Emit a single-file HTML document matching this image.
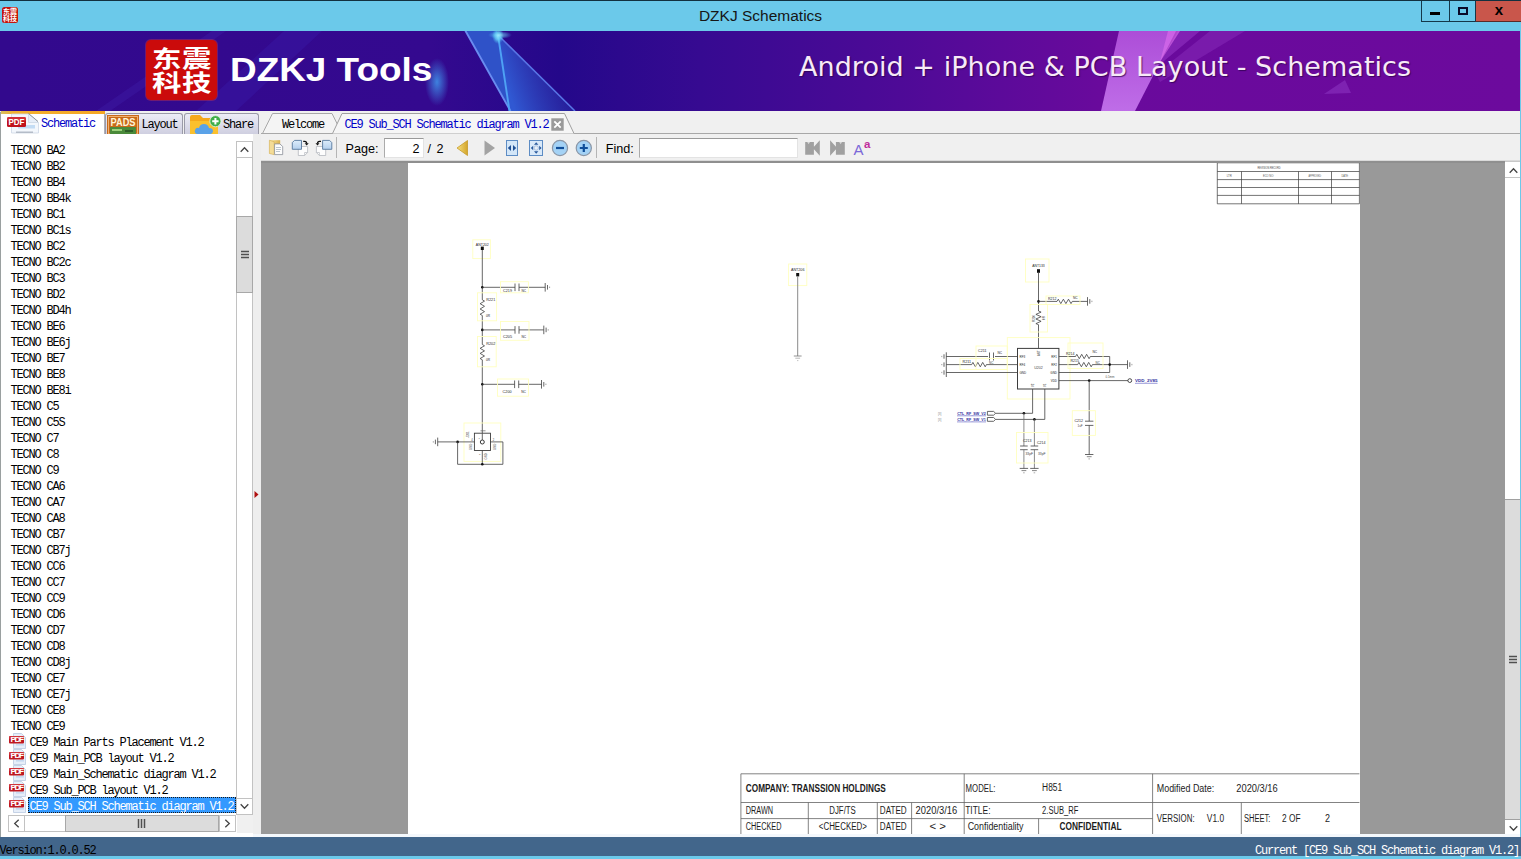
<!DOCTYPE html>
<html><head><meta charset="utf-8"><title>DZKJ Schematics</title>
<style>
*{box-sizing:border-box;margin:0;padding:0}
html,body{width:1521px;height:859px;overflow:hidden;background:#6bc9ea}
body{position:relative;font-family:"Liberation Sans",sans-serif;font-size:12px;color:#000}
.abs{position:absolute}
.mono{font-family:"Liberation Mono","Noto Sans CJK SC",monospace;font-size:12px;letter-spacing:-1.2px;white-space:pre}
#topline{left:0;top:0;width:1521px;height:1px;background:#12303f}
#titlebar{left:0;top:1px;width:1521px;height:30px;background:#6bc9ea}
#title{left:0;top:1px;width:1521px;height:30px;line-height:29px;text-align:center;font-size:15.5px;color:#161616}
#banner{left:0;top:31px;width:1520px;height:80px;background:linear-gradient(90deg,#32098d 0,#34098f 430px,#24088a 560px,#2c098d 620px,#360a91 700px,#420a94 800px,#4e0a97 900px,#5c0a9a 1000px,#690a9c 1100px,#6c0a9d 1520px);overflow:hidden}
#tabstrip{left:0;top:111px;width:1520px;height:23px;background:#f0f0f0}
#side{left:0;top:112px;width:253px;height:725px;background:transparent;border-left:1.500px solid #9aa0a0}
#split{left:253px;top:134px;width:8px;height:702px;background:#eeeeee}
#toolbar{left:261px;top:134px;width:1259px;height:27px;background:#f0f0f0}
#viewer{left:261px;top:161px;width:1244px;height:673px;background:#999999;overflow:hidden;border-top:2px solid #8f8f8f}
#page{left:146.5px;top:0;width:952px;height:673px;background:#fff}
#status{left:0;top:836.5px;width:1521px;height:19.5px;background:#42668b}

#logo{left:146px;top:40px;width:71px;height:60px;background:#cb0b0b;border-radius:5px;box-shadow:0 0 0 1px rgba(230,60,60,.35)}
#logo span{position:absolute;left:5.5px;font-family:"Liberation Sans","Noto Sans CJK SC",sans-serif;font-weight:bold;font-size:23px;line-height:24px;color:#fff;letter-spacing:0.4px;white-space:nowrap;transform-origin:0 0;transform:scaleX(1.28)}
#brand{left:232px;top:48px;font-family:"Liberation Sans",sans-serif;font-weight:bold;font-size:33px;line-height:40px;color:#fff;white-space:pre;transform-origin:0 0;transform:scaleX(1.118)}
#tagline{left:799px;top:51px;font-family:"DejaVu Sans","Liberation Sans",sans-serif;font-size:27px;line-height:32px;color:#f7eaf7;white-space:pre;text-shadow:1px 1px 1px rgba(40,0,70,.7);letter-spacing:0.05px}

#appicon{left:2px;top:7px;width:16px;height:16px;background:#c4140c;border-radius:2.5px;overflow:hidden;color:#fff;font-family:"Liberation Sans","Noto Sans CJK SC",sans-serif;font-weight:bold;font-size:7px;line-height:7px;text-align:center;padding-top:1px;letter-spacing:0}
#wc{left:1421px;top:1px;width:100px;height:21px}
#wc div{position:absolute;top:0;height:21px}
.tab{position:absolute;top:113px;height:21px;border:1px solid #9a9aa8;border-bottom:none;border-radius:3px 3px 0 0;background:linear-gradient(#ececf6,#dcdcea 55%,#cfcfe0)}
.tabtxt{position:absolute;top:117px;line-height:14px}

#list{left:1px;top:141px;width:236px;height:672px;overflow:hidden}
#list div{height:16px;line-height:20px;padding-left:9.5px;position:relative;overflow:visible}
#list div.f{padding-left:28.5px}
#list div.f svg{position:absolute;left:7px;top:-1px}
#list div.sel span{display:inline-block;vertical-align:top;height:16px;line-height:20px;background:#3399ff;color:#fff;outline:1px dotted #1a1a1a;outline-offset:-1px;padding:0 1.5px 0 1.5px;margin-left:-1.5px;width:208px}
.sb{position:absolute;background:#fff;border:1px solid #c2c2c2}
.thumb{position:absolute;background:#dcdcdc;border:1px solid #a8a8a8}

#toolbar .t{position:absolute;top:7.600px;font-size:12.600px;line-height:15px;white-space:pre;color:#000}
.inp{position:absolute;background:#fff;border:1px solid #e3e3e3;border-top-color:#9a9a9a;border-left-color:#ababab}
</style></head><body>
<div id="topline" class="abs"></div>
<div id="titlebar" class="abs"></div>
<div id="title" class="abs">DZKJ Schematics</div>
<div id="appicon" class="abs">东震<br>科技</div>
<div id="wc" class="abs">
<div style="left:0;width:28px;border-left:1px solid #14384a;border-bottom:1px solid #14384a"></div>
<div style="left:28px;width:27px;border-left:1px solid #14384a;border-bottom:1px solid #14384a"></div>
<div style="left:54px;width:46px;background:#c9564b;border-left:1px solid #14384a;border-bottom:1px solid #5a2a28"></div>
<div style="left:9px;top:11px;width:10px;height:3px;background:#000"></div>
<div style="left:37px;top:6px;width:10px;height:8px;border:2px solid #0a0a28;border-top-width:2px"></div>
<div style="left:70px;top:-1px;width:16px;height:21px;line-height:19px;text-align:center;font-weight:bold;font-size:15px;font-family:'Liberation Sans',sans-serif;color:#000">x</div>
</div>
<div id="banner" class="abs">
<svg class="abs" style="left:0;top:0" width="1520" height="80" viewBox="0 31 1520 80">
<defs>
<linearGradient id="ray1" x1="0" y1="0" x2="0" y2="1"><stop offset="0" stop-color="#3a6ad8"/><stop offset="1" stop-color="#2a4ec4"/></linearGradient>
<radialGradient id="glow1"><stop offset="0" stop-color="#3f8fe8" stop-opacity=".9"/><stop offset="1" stop-color="#3f8fe8" stop-opacity="0"/></radialGradient>
<radialGradient id="glow2"><stop offset="0" stop-color="#a8f0ff" stop-opacity="1"/><stop offset=".5" stop-color="#66d4f8" stop-opacity=".75"/><stop offset="1" stop-color="#4fb8f0" stop-opacity="0"/></radialGradient>
<linearGradient id="pray" x1="0" y1="0" x2="0" y2="1"><stop offset="0" stop-color="#b455de"/><stop offset="1" stop-color="#c878f0"/></linearGradient>
</defs>
<polygon points="96,111 110,111 226,31 212,31" fill="#4a30c4" opacity=".2"/>
<polygon points="196,111 236,111 322,31 284,31" fill="#3a22b4" opacity=".3"/>
<linearGradient id="rayR" gradientUnits="userSpaceOnUse" x1="503" y1="75" x2="552" y2="58"><stop offset="0" stop-color="#3058d2" stop-opacity="1"/><stop offset="1" stop-color="#2a34ac" stop-opacity=".55"/></linearGradient>
<polygon points="498,35 575,111 509,111" fill="url(#rayR)"/>
<polygon points="465,31 497,31 498,35 509,111 510,111" fill="#2f52c8"/>
<line x1="465" y1="30" x2="510.5" y2="111" stroke="#6a8cf0" stroke-width="1.9"/>
<line x1="498" y1="35" x2="509.5" y2="111" stroke="#4ea2f4" stroke-width="1.9"/>
<line x1="498" y1="35" x2="575" y2="111" stroke="#5876e6" stroke-width="1.5"/>
<ellipse cx="498" cy="36" rx="6" ry="8" fill="url(#glow2)"/>
<ellipse cx="500" cy="35" rx="12" ry="4" fill="url(#glow2)" opacity=".6"/>
<ellipse cx="437" cy="82" rx="12" ry="24" fill="url(#glow1)"/>
<polygon points="1119,31 1176,31 1135,111 1101,111" fill="url(#pray)" opacity=".9"/>
<polygon points="1178,31 1200,31 1158,66 1152,76" fill="#a040d0" opacity=".45"/>
<polygon points="1210,31 1245,31 1160,82 1156,74" fill="#9236c4" opacity=".38"/>
<polygon points="1168,31 1180,31 1160,62" fill="#e070ee" opacity=".6"/>
<polygon points="1324,94 1345,80 1351,93" fill="#8a32c0" opacity=".6"/>
</svg>
<div id="logo" class="abs" style="left:146px;top:9px"><span style="top:6.5px">东震</span><span style="top:30.5px">科技</span></div>
<div id="brand" class="abs" style="left:229.9px;top:18.5px">DZKJ Tools</div>
<div id="tagline" class="abs" style="top:20px">Android + iPhone &amp; PCB Layout - Schematics</div>
</div>
<div id="tabstrip" class="abs"></div>
<!-- left tabs -->
<div class="abs" style="left:1px;top:111px;width:104px;height:23px;background:#fff;border-right:1px solid #b0b0b8"></div>
<div class="abs" style="left:1px;top:111px;width:104px;height:2.500px;background:linear-gradient(90deg,#d8c060,#f2b030 12%,#f5a623)"></div>
<svg class="abs" style="left:6px;top:112px" width="34" height="22" viewBox="0 0 34 22">
<path d="M5.500 2h17l10 8.500v10.500h-27z" fill="#f3f7fc" stroke="#cdd7e4" stroke-width=".8"/>
<path d="M22.500 2v8.500h10" fill="#e6eef8" stroke="#cdd7e4" stroke-width=".8"/>
<path d="M22.500 1.500l9.500 8" stroke="#707880" stroke-width=".8"/>
<rect x="12" y="13" width="17" height="3.500" fill="#c3dcf4"/><rect x="10" y="19.500" width="17" height="1.500" fill="#b4bcc8"/>
<rect x="1" y="5" width="19" height="10" rx="1.5" fill="#c0121c"/>
<rect x="1" y="5" width="19" height="4" rx="1.5" fill="#d83a40" opacity=".7"/>
<text x="10.5" y="13.3" font-family="Liberation Sans,sans-serif" font-weight="bold" font-size="8.5" fill="#fff" text-anchor="middle" textLength="16" lengthAdjust="spacingAndGlyphs">PDF</text>
</svg>
<div class="tabtxt mono" style="left:41px;color:#0000c8">Schematic</div>
<div class="tab" style="left:105px;width:78px"></div>
<svg class="abs" style="left:107px;top:115px" width="32" height="19" viewBox="0 0 32 19">
<rect x="0" y="0" width="32" height="19" fill="#c86a1a"/>
<rect x="1.5" y="1.5" width="29" height="17.5" fill="none" stroke="#f0b070" stroke-width="1"/>
<rect x="3" y="12" width="26" height="7" fill="#4a8a3a"/>
<rect x="5" y="14" width="10" height="2" fill="#9ad07a"/><rect x="18" y="15" width="8" height="2" fill="#2e5e28"/>
<text x="16" y="11" font-family="Liberation Sans,sans-serif" font-weight="bold" font-size="10" fill="#fff4d8" text-anchor="middle" textLength="25" lengthAdjust="spacingAndGlyphs">PADS</text>
</svg>
<div class="tabtxt mono" style="left:141.5px;top:118px">Layout</div>
<div class="tab" style="left:184px;width:75px"></div>
<svg class="abs" style="left:189px;top:114px" width="34" height="20" viewBox="0 0 34 20">
<path d="M1 3q0-2 2-2h8l3 3h13q2 0 2 2v14h-28z" fill="#f5a81c"/>
<path d="M1 7h28v13h-28z" fill="#fbc02d"/>
<path d="M8 20q-3-1-2-4q1-3 4-2q1-4 5-4q4 0 5 4q4 0 4 3q0 2-2 3z" fill="#5aa2e8"/>
<circle cx="26.4" cy="7.2" r="5.6" fill="#3fae49" stroke="#e9f7e9" stroke-width=".8"/>
<path d="M26.4 4v6.4M23.2 7.2h6.4" stroke="#fff" stroke-width="2"/>
</svg>
<div class="tabtxt mono" style="left:223px;top:118px">Share</div>
<!-- doc tabs -->
<svg class="abs" style="left:261px;top:111px" width="330" height="24" viewBox="261 111 330 24">
<path d="M262.5 133.5L272.5 113.5H332L342 133.5z" fill="#f4f4f4" stroke="#a8a8a8"/>
<path d="M261 133.5H1520" stroke="#a8a8a8"/>
<path d="M332.5 133.5L342 113.5H564.5L574 133.5z" fill="#f6f6f6" stroke="none"/>
<path d="M332.5 133.5L342 113.5H564.5L574 133.5" fill="none" stroke="#a0a0a0"/>
<rect x="551.300" y="118.300" width="12.400" height="12.400" fill="#9a9a9a"/>
<path d="M554.300 121.300l6.400 6.400m0-6.400l-6.400 6.400" stroke="#fff" stroke-width="1.800"/>
</svg>
<div class="abs" style="left:574px;top:133px;width:946px;height:1px;background:#a8a8a8"></div>
<div class="tabtxt mono" style="left:282px;top:118px">Welcome</div>
<div class="tabtxt mono" style="left:344.5px;top:118px;color:#0000c8">CE9 Sub_SCH Schematic diagram V1.2</div>

<div class="abs" style="left:0;top:134px;width:253px;height:703px;background:#fff"></div><div class="abs" style="left:236.500px;top:814.400px;width:25px;height:18.600px;background:#f0f0f0"></div><div id="side" class="abs"></div>
<div id="split" class="abs"></div><div id="list" class="abs mono"><div>TECNO BA2</div><div>TECNO BB2</div><div>TECNO BB4</div><div>TECNO BB4k</div><div>TECNO BC1</div><div>TECNO BC1s</div><div>TECNO BC2</div><div>TECNO BC2c</div><div>TECNO BC3</div><div>TECNO BD2</div><div>TECNO BD4h</div><div>TECNO BE6</div><div>TECNO BE6j</div><div>TECNO BE7</div><div>TECNO BE8</div><div>TECNO BE8i</div><div>TECNO C5</div><div>TECNO C5S</div><div>TECNO C7</div><div>TECNO C8</div><div>TECNO C9</div><div>TECNO CA6</div><div>TECNO CA7</div><div>TECNO CA8</div><div>TECNO CB7</div><div>TECNO CB7j</div><div>TECNO CC6</div><div>TECNO CC7</div><div>TECNO CC9</div><div>TECNO CD6</div><div>TECNO CD7</div><div>TECNO CD8</div><div>TECNO CD8j</div><div>TECNO CE7</div><div>TECNO CE7j</div><div>TECNO CE8</div><div>TECNO CE9</div><div class="f"><svg width="20" height="17" viewBox="0 0 20 17"><path d="M5.5 1.5h8l4 4v11h-12z" fill="#e6eef9" stroke="#b9c9df" stroke-width=".8"/><rect x="8" y="9" width="8" height="1.6" fill="#b7cfee"/><rect x="8" y="12" width="8" height="1.6" fill="#c6d9f0"/><rect x="1" y="4" width="15" height="7.5" rx="1" fill="#bf1820"/><rect x="1" y="4" width="15" height="3" rx="1" fill="#dc4a50" opacity=".6"/><text x="8.5" y="10.3" font-family="Liberation Sans,sans-serif" font-weight="bold" font-size="6.5" fill="#fff" text-anchor="middle" textLength="12" lengthAdjust="spacingAndGlyphs">PDF</text></svg>CE9 Main Parts Placement V1.2</div><div class="f"><svg width="20" height="17" viewBox="0 0 20 17"><path d="M5.5 1.5h8l4 4v11h-12z" fill="#e6eef9" stroke="#b9c9df" stroke-width=".8"/><rect x="8" y="9" width="8" height="1.6" fill="#b7cfee"/><rect x="8" y="12" width="8" height="1.6" fill="#c6d9f0"/><rect x="1" y="4" width="15" height="7.5" rx="1" fill="#bf1820"/><rect x="1" y="4" width="15" height="3" rx="1" fill="#dc4a50" opacity=".6"/><text x="8.5" y="10.3" font-family="Liberation Sans,sans-serif" font-weight="bold" font-size="6.5" fill="#fff" text-anchor="middle" textLength="12" lengthAdjust="spacingAndGlyphs">PDF</text></svg>CE9 Main_PCB layout V1.2</div><div class="f"><svg width="20" height="17" viewBox="0 0 20 17"><path d="M5.5 1.5h8l4 4v11h-12z" fill="#e6eef9" stroke="#b9c9df" stroke-width=".8"/><rect x="8" y="9" width="8" height="1.6" fill="#b7cfee"/><rect x="8" y="12" width="8" height="1.6" fill="#c6d9f0"/><rect x="1" y="4" width="15" height="7.5" rx="1" fill="#bf1820"/><rect x="1" y="4" width="15" height="3" rx="1" fill="#dc4a50" opacity=".6"/><text x="8.5" y="10.3" font-family="Liberation Sans,sans-serif" font-weight="bold" font-size="6.5" fill="#fff" text-anchor="middle" textLength="12" lengthAdjust="spacingAndGlyphs">PDF</text></svg>CE9 Main_Schematic diagram V1.2</div><div class="f"><svg width="20" height="17" viewBox="0 0 20 17"><path d="M5.5 1.5h8l4 4v11h-12z" fill="#e6eef9" stroke="#b9c9df" stroke-width=".8"/><rect x="8" y="9" width="8" height="1.6" fill="#b7cfee"/><rect x="8" y="12" width="8" height="1.6" fill="#c6d9f0"/><rect x="1" y="4" width="15" height="7.5" rx="1" fill="#bf1820"/><rect x="1" y="4" width="15" height="3" rx="1" fill="#dc4a50" opacity=".6"/><text x="8.5" y="10.3" font-family="Liberation Sans,sans-serif" font-weight="bold" font-size="6.5" fill="#fff" text-anchor="middle" textLength="12" lengthAdjust="spacingAndGlyphs">PDF</text></svg>CE9 Sub_PCB layout V1.2</div><div class="f sel"><svg width="20" height="17" viewBox="0 0 20 17"><path d="M5.5 1.5h8l4 4v11h-12z" fill="#e6eef9" stroke="#b9c9df" stroke-width=".8"/><rect x="8" y="9" width="8" height="1.6" fill="#b7cfee"/><rect x="8" y="12" width="8" height="1.6" fill="#c6d9f0"/><rect x="1" y="4" width="15" height="7.5" rx="1" fill="#bf1820"/><rect x="1" y="4" width="15" height="3" rx="1" fill="#dc4a50" opacity=".6"/><text x="8.5" y="10.3" font-family="Liberation Sans,sans-serif" font-weight="bold" font-size="6.5" fill="#fff" text-anchor="middle" textLength="12" lengthAdjust="spacingAndGlyphs">PDF</text></svg><span>CE9 Sub_SCH Schematic diagram V1.2</span></div></div>
<div class="sb" style="left:236px;top:141px;width:17px;height:673px"></div>
<div class="sb" style="left:236px;top:141px;width:17px;height:17px"><svg class="abs" style="left:3px;top:4px" width="9" height="7" viewBox="0 0 9 7"><path d="M.7 5.7L4.5 1.7L8.3 5.7" fill="none" stroke="#444" stroke-width="1.3"/></svg></div>
<div class="thumb" style="left:236px;top:216px;width:17px;height:77px"><svg class="abs" style="left:4px;top:33px" width="8" height="9" viewBox="0 0 8 9"><path d="M0 1.5h8M0 4.5h8M0 7.5h8" stroke="#505050" stroke-width="1.5"/></svg></div>
<div class="sb" style="left:236px;top:798px;width:17px;height:16.500px"><svg class="abs" style="left:3px;top:4px" width="9" height="7" viewBox="0 0 9 7"><path d="M.7 1.3L4.5 5.3L8.3 1.3" fill="none" stroke="#444" stroke-width="1.3"/></svg></div>
<div class="sb" style="left:8px;top:815px;width:228px;height:17px"></div>
<div class="sb" style="left:8px;top:815px;width:17px;height:17px"><svg class="abs" style="left:4px;top:3px" width="7" height="9" viewBox="0 0 7 9"><path d="M5.7 .7L1.7 4.5L5.7 8.3" fill="none" stroke="#444" stroke-width="1.3"/></svg></div>
<div class="thumb" style="left:65px;top:815px;width:154px;height:17px"><svg class="abs" style="left:71px;top:3px" width="9" height="9" viewBox="0 0 9 9"><path d="M1.5 0v9M4.5 0v9M7.5 0v9" stroke="#505050" stroke-width="1.5"/></svg></div>
<div class="sb" style="left:219px;top:815px;width:17px;height:17px"><svg class="abs" style="left:4px;top:3px" width="7" height="9" viewBox="0 0 7 9"><path d="M1.3 .7L5.3 4.5L1.3 8.3" fill="none" stroke="#444" stroke-width="1.3"/></svg></div>
<svg class="abs" style="left:254px;top:490px" width="5" height="9" viewBox="0 0 5 9"><path d="M.5 1L4.5 4.5L.5 8z" fill="#b01010"/></svg>

<div id="toolbar" class="abs">
<div class="abs" style="left:0;top:26px;width:1259px;height:1px;background:#dadada"></div>
<!-- icons: coordinates relative to toolbar (x-261,y-134) -->
<svg class="abs" style="left:0;top:0" width="620" height="27" viewBox="261 134 620 27">
<!-- copy icon -->
<defs><linearGradient id="fold" x1="0" y1="0" x2="1" y2="0"><stop offset="0" stop-color="#f7e6a8"/><stop offset=".45" stop-color="#ecd07c"/><stop offset="1" stop-color="#d8b050"/></linearGradient>
<linearGradient id="bpg" x1="0" y1="0" x2="0" y2="1"><stop offset="0" stop-color="#dcecfa"/><stop offset="1" stop-color="#b4d0ee"/></linearGradient></defs>
<path d="M269.400 140.200h10.800v13.600h-10.800z" fill="url(#fold)"/>
<path d="M269.400 140.200l4.800 1.600v12.900l-4.800-1.200z" fill="#f3dc98" stroke="#caa548" stroke-width=".5"/>
<path d="M274.600 143.900h5.200l2.900 2.600v8.100h-8.100z" fill="#fdfdfd" stroke="#8a8f98" stroke-width=".8"/>
<path d="M276 147.500h5M276 149.500h5M276 151.500h4" stroke="#a9b7c4" stroke-width=".8"/>
<!-- rotate cw -->
<path d="M298.300 146.500h9.300v6l-3 3h-6.300z" fill="#fdfdfd" stroke="#b4b8be" stroke-width=".8"/>
<path d="M304.600 155.500v-3h3" fill="none" stroke="#b4b8be" stroke-width=".7"/>
<path d="M294.500 140.400h7v8.900h-9.200v-6.700z" fill="url(#bpg)" stroke="#56789e" stroke-width=".9"/>
<path d="M303.200 141.300h1.500q2 0 2 2.200" fill="none" stroke="#111" stroke-width="1.200"/><path d="M304.700 143.300h4l-2 2.200z" fill="#111"/>
<!-- rotate ccw -->
<path d="M316.400 146.500h9.300v9h-6.300l-3-3z" fill="#fdfdfd" stroke="#b4b8be" stroke-width=".8"/>
<path d="M319.400 155.500v-3h-3" fill="none" stroke="#b4b8be" stroke-width=".7"/>
<path d="M322.600 140.400h7l2.200 2.200v6.700h-9.200z" fill="url(#bpg)" stroke="#56789e" stroke-width=".9"/>
<path d="M321 141.300h-1.500q-2 0-2 2.200" fill="none" stroke="#111" stroke-width="1.200"/><path d="M315.500 143.300h4l-2 2.200z" fill="#111"/>
<path d="M336.500 137v21" stroke="#b5b5b5"/>
<!-- prev / next -->
<defs><linearGradient id="gold" x1="0" y1="0" x2="1" y2="0"><stop offset="0" stop-color="#f6e080"/><stop offset="1" stop-color="#d4a52a"/></linearGradient></defs>
<path d="M467.500 140.500v15l-10.500-7.500z" fill="url(#gold)" stroke="#c79a2a" stroke-width=".8"/>
<path d="M484.500 140.500v15l10.500-7.500z" fill="#a3a3a3"/>
<!-- fit width -->
<rect x="506.500" y="140.500" width="11" height="15" fill="#d3e6f8" stroke="#5d8cc4"/>
<path d="M511 145v6l-3.200-3zM513 145v6l3.200-3z" fill="#1f4f94"/>
<!-- fit page -->
<rect x="529.500" y="140.500" width="13" height="15" fill="#d9e9f9" stroke="#5d8cc4"/>
<path d="M534 144.800h4.400l-2.200-2.600zM534 151.200h4.400l-2.200 2.600zM533.200 145.800v4.400l-2.400-2.200zM539.200 145.800v4.400l2.400-2.200z" fill="#2a5a9c"/>
<circle cx="536.200" cy="148" r="2.200" fill="#e8f0f8" stroke="#9fb8d8" stroke-width=".8"/>
<!-- zoom out/in -->
<circle cx="560" cy="148" r="7.600" fill="#a4d2f5" stroke="#8a96a6" stroke-width="1.2"/>
<path d="M556 148h8" stroke="#0f4e9a" stroke-width="2.200"/>
<circle cx="583.800" cy="148" r="7.600" fill="#a4d2f5" stroke="#8a96a6" stroke-width="1.2"/>
<path d="M579.800 148h8M583.800 144v8" stroke="#0f4e9a" stroke-width="2.200"/>
<path d="M596.500 137v21" stroke="#b5b5b5"/>
<!-- find prev/next -->
<path d="M805.200 142h8.700v12.700h-8.700zM819.800 140.300v15.400l-7-7.700z" fill="#a0a0a0"/>
<path d="M807.200 142l1.400 2.200l1.400-2.200z" fill="#d8d8d8"/>
<path d="M844.800 142h-8.900v12.700h8.900zM830.100 140.300v15.400l7-7.700z" fill="#a0a0a0"/>
<path d="M839.200 142l1.400 2.200l1.400-2.200z" fill="#d8d8d8"/>
</svg>
<div class="t" style="left:84.500px">Page:</div>
<div class="inp" style="left:123px;top:4px;width:40px;height:20px"></div>
<div class="t" style="left:151.500px">2</div>
<div class="t" style="left:166.500px">/</div><div class="t" style="left:175.500px">2</div>
<div class="t" style="left:344.700px">Find:</div>
<div class="inp" style="left:378px;top:4px;width:159px;height:19.500px"></div>
<div class="abs" style="left:592.500px;top:7px;font-size:15px;line-height:18px;color:#7b68d8;font-family:'Liberation Sans',sans-serif">A</div>
<div class="abs" style="left:603px;top:3.500px;font-size:11.500px;line-height:12px;color:#c02e9c;font-weight:bold;font-family:'Liberation Sans',sans-serif">a</div>
</div>
<div id="viewer" class="abs"><div id="page" class="abs"></div>
<!--SCH-START--><svg class="abs" style="left:0;top:0" width="1244" height="671" viewBox="261 163 1244 671" font-family="Liberation Sans,sans-serif" fill="none">
<path d="M1217.3 162.8L1359.4 162.8" stroke="#3a3a3a" stroke-width="0.7"/>
<path d="M1217.3 171.5L1359.4 171.5" stroke="#3a3a3a" stroke-width="0.7"/>
<path d="M1217.3 179.6L1359.4 179.6" stroke="#3a3a3a" stroke-width="0.7"/>
<path d="M1217.3 187.5L1359.4 187.5" stroke="#3a3a3a" stroke-width="0.7"/>
<path d="M1217.3 195.4L1359.4 195.4" stroke="#3a3a3a" stroke-width="0.7"/>
<path d="M1217.3 203.8L1359.4 203.8" stroke="#3a3a3a" stroke-width="0.7"/>
<path d="M1217.3 162.8L1217.3 203.8" stroke="#3a3a3a" stroke-width="0.7"/>
<path d="M1359.4 162.8L1359.4 203.8" stroke="#3a3a3a" stroke-width="0.7"/>
<path d="M1241.5 171.5L1241.5 203.8" stroke="#3a3a3a" stroke-width="0.7"/>
<path d="M1298.5 171.5L1298.5 203.8" stroke="#3a3a3a" stroke-width="0.7"/>
<path d="M1331.5 171.5L1331.5 203.8" stroke="#3a3a3a" stroke-width="0.7"/>
<text x="1269" y="168.7" font-size="2.8" fill="#444" text-anchor="middle" textLength="23" lengthAdjust="spacingAndGlyphs">REVISION RECORD</text>
<text x="1229.3" y="176.9" font-size="2.8" fill="#555" text-anchor="middle">LTR</text>
<text x="1268.5" y="176.9" font-size="2.8" fill="#555" text-anchor="middle" textLength="11" lengthAdjust="spacingAndGlyphs">ECO NO:</text>
<text x="1315" y="176.9" font-size="2.8" fill="#555" text-anchor="middle" textLength="13" lengthAdjust="spacingAndGlyphs">APPROVED:</text>
<text x="1345" y="176.9" font-size="2.8" fill="#555" text-anchor="middle" textLength="7" lengthAdjust="spacingAndGlyphs">DATE:</text>
<rect x="472.8" y="239.8" width="17.6" height="18.8" fill="none" stroke="#ffffc0" stroke-width="0.9"/>
<text x="482.3" y="245.6" font-size="3.3" fill="#262626" text-anchor="middle" textLength="13" lengthAdjust="spacingAndGlyphs">ANT202</text>
<rect x="480.8" y="246.6" width="3" height="3.4" fill="#111"/>
<path d="M482.3 250L482.3 299.8" stroke="#404040" stroke-width="0.8"/>
<path d="M482.3 299.8L484.5 301.1L480.1 303.7L484.5 306.3L480.1 309.0L484.5 311.6L480.1 314.2L482.3 315.5" fill="none" stroke="#404040" stroke-width="0.8"/>
<path d="M482.3 315.5L482.3 344.5" stroke="#404040" stroke-width="0.8"/>
<path d="M482.3 344.5L484.5 345.8L480.1 348.3L484.5 350.9L480.1 353.4L484.5 356.0L480.1 358.5L482.3 359.8" fill="none" stroke="#404040" stroke-width="0.8"/>
<path d="M482.3 359.8L482.3 433.2" stroke="#404040" stroke-width="0.8"/>
<rect x="477.5" y="292.8" width="19.1" height="28.0" fill="none" stroke="#ffffc0" stroke-width="0.9"/>
<rect x="477.5" y="336.5" width="18.7" height="30.3" fill="none" stroke="#ffffc0" stroke-width="0.9"/>
<text x="486.3" y="301.2" font-size="3.2" fill="#262626" textLength="9" lengthAdjust="spacingAndGlyphs">R221</text>
<text x="486" y="316.5" font-size="3.2" fill="#262626">0R</text>
<text x="486.3" y="344.5" font-size="3.2" fill="#262626" textLength="9" lengthAdjust="spacingAndGlyphs">R202</text>
<text x="486" y="361.2" font-size="3.2" fill="#262626">0R</text>
<circle cx="482.3" cy="287.3" r="1.3" fill="#111"/>
<path d="M482.3 287.3L515 287.3" stroke="#404040" stroke-width="0.8"/>
<path d="M519 287.3L545.2 287.3" stroke="#404040" stroke-width="0.8"/>
<path d="M515 283.5L515 291.1" stroke="#404040" stroke-width="0.8"/>
<path d="M519 283.5L519 291.1" stroke="#404040" stroke-width="0.8"/>
<path d="M545.2 283.0L545.2 291.6" stroke="#404040" stroke-width="0.8"/>
<path d="M547.5 285.0L547.5 289.6" stroke="#404040" stroke-width="0.8"/>
<path d="M549.6 286.6L549.6 288.0" stroke="#777" stroke-width="0.7"/>
<rect x="500.5" y="281.7" width="27.9" height="11.1" fill="none" stroke="#ffffc0" stroke-width="0.9"/>
<text x="503" y="291.6" font-size="3.2" fill="#262626" textLength="9" lengthAdjust="spacingAndGlyphs">C219</text>
<text x="521.5" y="291.6" font-size="3.2" fill="#262626">NC</text>
<circle cx="482.3" cy="329.9" r="1.3" fill="#111"/>
<path d="M482.3 329.9L515 329.9" stroke="#404040" stroke-width="0.8"/>
<path d="M519 329.9L543.8 329.9" stroke="#404040" stroke-width="0.8"/>
<path d="M515 326.09999999999997L515 333.7" stroke="#404040" stroke-width="0.8"/>
<path d="M519 326.09999999999997L519 333.7" stroke="#404040" stroke-width="0.8"/>
<path d="M543.8 325.59999999999997L543.8 334.2" stroke="#404040" stroke-width="0.8"/>
<path d="M546.0999999999999 327.59999999999997L546.0999999999999 332.2" stroke="#404040" stroke-width="0.8"/>
<path d="M548.1999999999999 329.2L548.1999999999999 330.59999999999997" stroke="#777" stroke-width="0.7"/>
<rect x="500.5" y="321.5" width="28.5" height="18.8" fill="none" stroke="#ffffc0" stroke-width="0.9"/>
<text x="503" y="338.2" font-size="3.2" fill="#262626" textLength="9" lengthAdjust="spacingAndGlyphs">C205</text>
<text x="521.5" y="338.2" font-size="3.2" fill="#262626">NC</text>
<circle cx="482.3" cy="384.3" r="1.3" fill="#111"/>
<path d="M482.3 384.3L514.6 384.3" stroke="#404040" stroke-width="0.8"/>
<path d="M518.7 384.3L541.5 384.3" stroke="#404040" stroke-width="0.8"/>
<path d="M514.6 380.5L514.6 388.1" stroke="#404040" stroke-width="0.8"/>
<path d="M518.7 380.5L518.7 388.1" stroke="#404040" stroke-width="0.8"/>
<path d="M541.5 380.0L541.5 388.6" stroke="#404040" stroke-width="0.8"/>
<path d="M543.8 382.0L543.8 386.6" stroke="#404040" stroke-width="0.8"/>
<path d="M545.9 383.6L545.9 385.0" stroke="#777" stroke-width="0.7"/>
<rect x="497.5" y="379" width="31.0" height="17.2" fill="none" stroke="#ffffc0" stroke-width="0.9"/>
<text x="502.6" y="393" font-size="3.2" fill="#262626" textLength="9" lengthAdjust="spacingAndGlyphs">C200</text>
<text x="521.2" y="393" font-size="3.2" fill="#262626">NC</text>
<rect x="464" y="423" width="36.8" height="38.4" fill="none" stroke="#ffffc0" stroke-width="0.9"/>
<rect x="474.4" y="433.2" width="16.1" height="17.3" fill="#fff" stroke="#3c3c3c" stroke-width="0.9"/>
<circle cx="482.3" cy="442" r="2" fill="#fff" stroke="#222" stroke-width="0.9"/>
<path d="M482.3 433.2L482.3 440" stroke="#404040" stroke-width="0.8"/>
<path d="M480.5 430.8L485.5 430.8" stroke="#666" stroke-width="0.7"/>
<path d="M437.7 441.9L474.4 441.9" stroke="#404040" stroke-width="0.8"/>
<path d="M437.7 437.59999999999997L437.7 446.2" stroke="#404040" stroke-width="0.8"/>
<path d="M435.4 439.59999999999997L435.4 444.2" stroke="#404040" stroke-width="0.8"/>
<path d="M433.3 441.2L433.3 442.59999999999997" stroke="#777" stroke-width="0.7"/>
<circle cx="457.6" cy="441.9" r="1.3" fill="#111"/>
<path d="M457.6 441.9L457.6 464.3L502.9 464.3L502.9 441.9L490.5 441.9" fill="none" stroke="#404040" stroke-width="0.8"/>
<path d="M482.3 450.5L482.3 464.3" stroke="#404040" stroke-width="0.8"/>
<circle cx="482.3" cy="464.3" r="1.3" fill="#111"/>
<text x="469.3" y="437.5" font-size="2.8" fill="#444" transform="rotate(-90 469.3 437.5)">J201</text>
<text x="472.3" y="450" font-size="2.8" fill="#444" transform="rotate(-90 472.3 450)">GND</text>
<text x="496" y="450" font-size="2.8" fill="#444" transform="rotate(-90 496 450)">GND</text>
<text x="487.3" y="459.5" font-size="2.8" fill="#444" transform="rotate(-90 487.3 459.5)">GND</text>
<text x="471.2" y="441" font-size="2.6" fill="#444">4</text>
<text x="492.8" y="441" font-size="2.6" fill="#444">2</text>
<text x="478.5" y="438.5" font-size="2.4" fill="#555">1</text>
<text x="479" y="454.5" font-size="2.4" fill="#555">3</text>
<rect x="788.6" y="264" width="18.2" height="21.6" fill="none" stroke="#ffffc0" stroke-width="0.9"/>
<text x="797.7" y="270.7" font-size="3.3" fill="#262626" text-anchor="middle" textLength="13.5" lengthAdjust="spacingAndGlyphs">ANT206</text>
<rect x="796.2" y="273" width="3" height="3.4" fill="#111"/>
<path d="M797.7 276L797.7 356" stroke="#8a8a8a" stroke-width="1.0"/>
<path d="M793.8 356L801.6 356" stroke="#777" stroke-width="0.8"/>
<path d="M795.3 358.2L800.1 358.2" stroke="#999" stroke-width="0.7"/>
<path d="M797 360.6L798.4 360.6" stroke="#aaa" stroke-width="0.7"/>
<rect x="1025.5" y="259" width="23.5" height="23.0" fill="none" stroke="#ffffc0" stroke-width="0.9"/>
<text x="1038.5" y="266.7" font-size="3.3" fill="#262626" text-anchor="middle" textLength="12.5" lengthAdjust="spacingAndGlyphs">ANT133</text>
<rect x="1037.0" y="269.2" width="3" height="3.6" fill="#111"/>
<path d="M1038.5 272L1038.5 311" stroke="#404040" stroke-width="0.8"/>
<path d="M1038.5 311.0L1041.1 312.1L1035.9 314.4L1041.1 316.7L1035.9 319.0L1041.1 321.3L1035.9 323.6L1038.5 324.7" fill="none" stroke="#404040" stroke-width="0.8"/>
<path d="M1038.5 324.7L1038.5 348.4" stroke="#404040" stroke-width="0.8"/>
<circle cx="1038.5" cy="301.4" r="1.3" fill="#111"/>
<path d="M1038.5 301.4L1057 301.4" stroke="#404040" stroke-width="0.8"/>
<path d="M1057.0 301.4L1058.3 299.2L1060.8 303.6L1063.4 299.2L1065.9 303.6L1068.5 299.2L1071.0 303.6L1072.3 301.4" fill="none" stroke="#404040" stroke-width="0.8"/>
<path d="M1072.3 301.4L1087.5 301.4" stroke="#404040" stroke-width="0.8"/>
<path d="M1087.5 297.09999999999997L1087.5 305.7" stroke="#404040" stroke-width="0.8"/>
<path d="M1089.8 299.09999999999997L1089.8 303.7" stroke="#404040" stroke-width="0.8"/>
<path d="M1091.9 300.7L1091.9 302.09999999999997" stroke="#777" stroke-width="0.7"/>
<rect x="1046" y="296" width="34.0" height="8.5" fill="none" stroke="#ffffc0" stroke-width="0.9"/>
<rect x="1030" y="304.5" width="17.5" height="27.5" fill="none" stroke="#ffffc0" stroke-width="0.9"/>
<text x="1048" y="299.6" font-size="3.2" fill="#262626" textLength="8.5" lengthAdjust="spacingAndGlyphs">R212</text>
<text x="1073" y="299" font-size="3.2" fill="#262626">NC</text>
<text x="1034.5" y="322" font-size="3.0" fill="#262626" transform="rotate(-90 1034.5 322)">R210</text>
<text x="1045" y="320" font-size="3.0" fill="#262626" transform="rotate(-90 1045 320)">0R</text>
<rect x="1007.3" y="337.6" width="62.7" height="61.4" fill="none" stroke="#ffffc0" stroke-width="0.9"/>
<rect x="1017.5" y="348.4" width="41.4" height="40.6" fill="#fff" stroke="#3c3c3c" stroke-width="1"/>
<text x="1019.5" y="357.8" font-size="3.0" fill="#262626">RF3</text>
<text x="1019.5" y="365.8" font-size="3.0" fill="#262626">RF4</text>
<text x="1019.5" y="373.7" font-size="3.0" fill="#262626">GND</text>
<text x="1057" y="357.8" font-size="3.0" fill="#262626" text-anchor="end">RF1</text>
<text x="1057" y="365.8" font-size="3.0" fill="#262626" text-anchor="end">RF2</text>
<text x="1057" y="373.7" font-size="3.0" fill="#262626" text-anchor="end">GND</text>
<text x="1057" y="381.8" font-size="3.0" fill="#262626" text-anchor="end">VDD</text>
<text x="1038.5" y="369" font-size="3.0" fill="#444" text-anchor="middle" textLength="8.5" lengthAdjust="spacingAndGlyphs">U202</text>
<text x="1039.7" y="356" font-size="2.8" fill="#262626" transform="rotate(-90 1039.7 356)">ANT</text>
<text x="1033.6" y="387" font-size="2.8" fill="#262626" transform="rotate(-90 1033.6 387)">V2</text>
<text x="1045.6" y="387" font-size="2.8" fill="#262626" transform="rotate(-90 1045.6 387)">V1</text>
<path d="M946.3 356.5L1017.5 356.5" stroke="#404040" stroke-width="0.8"/>
<path d="M946.3 364.6L1017.5 364.6" stroke="#404040" stroke-width="0.8"/>
<path d="M946.3 372.5L1017.5 372.5" stroke="#404040" stroke-width="0.8"/>
<path d="M946.3 352.3L946.3 377" stroke="#404040" stroke-width="0.8"/>
<path d="M944 354.3L944 358.7" stroke="#404040" stroke-width="0.8"/>
<path d="M941.8 355.9L941.8 357.1" stroke="#777" stroke-width="0.7"/>
<path d="M944 362.40000000000003L944 366.8" stroke="#404040" stroke-width="0.8"/>
<path d="M941.8 364.0L941.8 365.20000000000005" stroke="#777" stroke-width="0.7"/>
<path d="M944 370.3L944 374.7" stroke="#404040" stroke-width="0.8"/>
<path d="M941.8 371.9L941.8 373.1" stroke="#777" stroke-width="0.7"/>
<rect x="988" y="355.5" width="7" height="2" fill="#fff"/>
<path d="M989.5 352.5L989.5 360.5" stroke="#404040" stroke-width="0.8"/>
<path d="M993.5 352.5L993.5 360.5" stroke="#404040" stroke-width="0.8"/>
<rect x="971.7" y="362" width="14.7" height="5" fill="#fff"/>
<path d="M971.7 364.6L972.9 362.4L975.4 366.8L977.8 362.4L980.3 366.8L982.7 362.4L985.2 366.8L986.4 364.6" fill="none" stroke="#404040" stroke-width="0.8"/>
<rect x="976" y="346" width="31.3" height="23.5" fill="none" stroke="#ffffc0" stroke-width="0.9"/>
<rect x="960" y="358.5" width="47.3" height="11.0" fill="none" stroke="#ffffc0" stroke-width="0.9"/>
<text x="978" y="351.8" font-size="3.2" fill="#262626" textLength="8.5" lengthAdjust="spacingAndGlyphs">C211</text>
<text x="997.5" y="353.5" font-size="3.2" fill="#262626">NC</text>
<text x="962.5" y="363.3" font-size="3.2" fill="#262626" textLength="8.5" lengthAdjust="spacingAndGlyphs">R211</text>
<text x="989" y="364" font-size="3.0" fill="#444">NC</text>
<path d="M1058.9 356.5L1075.6 356.5" stroke="#404040" stroke-width="0.8"/>
<path d="M1075.6 356.5L1076.8 354.3L1079.3 358.7L1081.7 354.3L1084.2 358.7L1086.6 354.3L1089.1 358.7L1090.3 356.5" fill="none" stroke="#404040" stroke-width="0.8"/>
<path d="M1090.3 356.5L1109.7 356.5" stroke="#404040" stroke-width="0.8"/>
<path d="M1058.9 364.6L1077.7 364.6" stroke="#404040" stroke-width="0.8"/>
<path d="M1077.7 364.6L1078.9 362.4L1081.4 366.8L1083.8 362.4L1086.3 366.8L1088.7 362.4L1091.2 366.8L1092.4 364.6" fill="none" stroke="#404040" stroke-width="0.8"/>
<path d="M1092.4 364.6L1127.5 364.6" stroke="#404040" stroke-width="0.8"/>
<path d="M1058.9 372.5L1109.7 372.5" stroke="#404040" stroke-width="0.8"/>
<path d="M1109.7 356.5L1109.7 372.5" stroke="#404040" stroke-width="0.8"/>
<circle cx="1109.7" cy="364.6" r="1.3" fill="#111"/>
<path d="M1127.5 360.3L1127.5 368.90000000000003" stroke="#404040" stroke-width="0.8"/>
<path d="M1129.8 362.3L1129.8 366.90000000000003" stroke="#404040" stroke-width="0.8"/>
<path d="M1131.9 363.90000000000003L1131.9 365.3" stroke="#777" stroke-width="0.7"/>
<rect x="1068" y="343" width="35.0" height="25.5" fill="none" stroke="#ffffc0" stroke-width="0.9"/>
<text x="1066" y="354.6" font-size="3.2" fill="#262626" textLength="8.5" lengthAdjust="spacingAndGlyphs">R214</text>
<text x="1092.5" y="353" font-size="3.2" fill="#262626">NC</text>
<text x="1070.5" y="362.3" font-size="3.2" fill="#262626" textLength="8.5" lengthAdjust="spacingAndGlyphs">R215</text>
<text x="1095.5" y="364" font-size="3.0" fill="#444">NC</text>
<path d="M1058.9 380.6L1128 380.6" stroke="#404040" stroke-width="0.8"/>
<circle cx="1089.2" cy="380.6" r="1.3" fill="#111"/>
<circle cx="1129.8" cy="380.6" r="1.9" fill="#fff" stroke="#222" stroke-width="0.8"/>
<text x="1105.5" y="378.2" font-size="2.8" fill="#555" textLength="9" lengthAdjust="spacingAndGlyphs">0.1mm</text>
<text x="1135" y="382.3" font-size="4.4" fill="#2e2e9c" font-weight="bold" textLength="22.5" lengthAdjust="spacingAndGlyphs">VDD_2V85</text>
<path d="M1135 383.3L1157.5 383.3" stroke="#5858c0" stroke-width="0.6"/>
<path d="M1089.2 380.6L1089.2 421.2" stroke="#404040" stroke-width="0.8"/>
<path d="M1085.0 421.2L1093.4 421.2" stroke="#404040" stroke-width="0.8"/>
<path d="M1085.0 425.4L1093.4 425.4" stroke="#404040" stroke-width="0.8"/>
<path d="M1089.2 425.4L1089.2 454.5" stroke="#404040" stroke-width="0.8"/>
<path d="M1085.0 454.5L1093.4 454.5" stroke="#404040" stroke-width="0.8"/>
<path d="M1086.8 456.7L1091.6000000000001 456.7" stroke="#666" stroke-width="0.8"/>
<path d="M1088.4 458.9L1090.0 458.9" stroke="#888" stroke-width="0.7"/>
<rect x="1072.3" y="410.7" width="23.1" height="24.7" fill="none" stroke="#ffffc0" stroke-width="0.9"/>
<text x="1074.5" y="422" font-size="3.2" fill="#262626" textLength="8.5" lengthAdjust="spacingAndGlyphs">C212</text>
<text x="1077.5" y="426.5" font-size="3.0" fill="#444">1uF</text>
<path d="M1032.6 389L1032.6 413.3" stroke="#404040" stroke-width="0.8"/>
<path d="M1044.8 389L1044.8 419.4" stroke="#404040" stroke-width="0.8"/>
<path d="M995.6 413.3L1032.6 413.3" stroke="#404040" stroke-width="0.8"/>
<path d="M995.6 419.4L1044.8 419.4" stroke="#404040" stroke-width="0.8"/>
<circle cx="1023.9" cy="413.3" r="1.3" fill="#111"/>
<circle cx="1034.4" cy="419.4" r="1.3" fill="#111"/>
<path d="M987.4 411.4L993.6 411.4L995.6 413.3L993.6 415.2L987.4 415.2L987.4 411.4" fill="#fff" stroke="#404040" stroke-width="0.8"/>
<path d="M987.4 417.5L993.6 417.5L995.6 419.4L993.6 421.3L987.4 421.3L987.4 417.5" fill="#fff" stroke="#404040" stroke-width="0.8"/>
<text x="957.2" y="414.8" font-size="4.2" fill="#2e2e9c" font-weight="bold" textLength="28.5" lengthAdjust="spacingAndGlyphs">CTL_RF_SW_V2</text>
<path d="M957 415.8L986 415.8" stroke="#5858c0" stroke-width="0.6"/>
<text x="957.2" y="420.9" font-size="4.2" fill="#2e2e9c" font-weight="bold" textLength="28.5" lengthAdjust="spacingAndGlyphs">CTL_RF_SW_V1</text>
<path d="M957 421.9L986 421.9" stroke="#5858c0" stroke-width="0.6"/>
<text x="938" y="414.6" font-size="3.0" fill="#888">[3]</text>
<text x="938" y="420.7" font-size="3.0" fill="#888">[3]</text>
<path d="M1023.9 413.3L1023.9 446" stroke="#6a6a6a" stroke-width="0.8"/>
<path d="M1020.1 446L1027.7 446" stroke="#404040" stroke-width="0.8"/>
<path d="M1020.1 449.7L1027.7 449.7" stroke="#404040" stroke-width="0.8"/>
<path d="M1023.9 449.7L1023.9 468.4" stroke="#6a6a6a" stroke-width="0.8"/>
<path d="M1019.6999999999999 468.4L1028.1 468.4" stroke="#404040" stroke-width="0.8"/>
<path d="M1021.5 470.59999999999997L1026.3 470.59999999999997" stroke="#666" stroke-width="0.8"/>
<path d="M1023.1 472.79999999999995L1024.7 472.79999999999995" stroke="#888" stroke-width="0.7"/>
<path d="M1034.4 419.4L1034.4 446" stroke="#6a6a6a" stroke-width="0.8"/>
<path d="M1030.6000000000001 446L1038.2 446" stroke="#404040" stroke-width="0.8"/>
<path d="M1030.6000000000001 449.7L1038.2 449.7" stroke="#404040" stroke-width="0.8"/>
<path d="M1034.4 449.7L1034.4 468.4" stroke="#6a6a6a" stroke-width="0.8"/>
<path d="M1030.2 468.4L1038.6000000000001 468.4" stroke="#404040" stroke-width="0.8"/>
<path d="M1032.0 470.59999999999997L1036.8000000000002 470.59999999999997" stroke="#666" stroke-width="0.8"/>
<path d="M1033.6000000000001 472.79999999999995L1035.2 472.79999999999995" stroke="#888" stroke-width="0.7"/>
<rect x="1016.5" y="432.5" width="31.5" height="30.5" fill="none" stroke="#ffffc0" stroke-width="0.9"/>
<text x="1023" y="442.3" font-size="3.2" fill="#262626" textLength="8.5" lengthAdjust="spacingAndGlyphs">C213</text>
<text x="1037" y="443.5" font-size="3.2" fill="#262626" textLength="8.5" lengthAdjust="spacingAndGlyphs">C214</text>
<text x="1025.5" y="454.5" font-size="3.0" fill="#444" textLength="7.5" lengthAdjust="spacingAndGlyphs">33pF</text>
<text x="1038" y="454.5" font-size="3.0" fill="#444" textLength="7.5" lengthAdjust="spacingAndGlyphs">33pF</text>
<path d="M740.9 773.8L1359.4 773.8" stroke="#636363" stroke-width="0.8"/>
<path d="M740.9 802.5L1359.4 802.5" stroke="#636363" stroke-width="0.8"/>
<path d="M740.9 818.6L1152.6 818.6" stroke="#636363" stroke-width="0.8"/>
<path d="M740.9 773.8L740.9 834.5" stroke="#636363" stroke-width="0.8"/>
<path d="M964.2 773.8L964.2 834.5" stroke="#636363" stroke-width="0.8"/>
<path d="M1152.6 773.8L1152.6 834.5" stroke="#636363" stroke-width="0.8"/>
<path d="M808.3 802.5L808.3 834.5" stroke="#636363" stroke-width="0.8"/>
<path d="M877.3 802.5L877.3 834.5" stroke="#636363" stroke-width="0.8"/>
<path d="M911.6 802.5L911.6 834.5" stroke="#636363" stroke-width="0.8"/>
<path d="M1038.6 818.6L1038.6 834.5" stroke="#636363" stroke-width="0.8"/>
<path d="M1241.3 802.5L1241.3 834.5" stroke="#636363" stroke-width="0.8"/>
<text x="745.8" y="791.9" font-size="10" fill="#1c1c1c" font-weight="bold" textLength="140" lengthAdjust="spacingAndGlyphs">COMPANY: TRANSSION HOLDINGS</text>
<text x="965.6" y="791.9" font-size="10" fill="#1c1c1c" textLength="29.9" lengthAdjust="spacingAndGlyphs">MODEL:</text>
<text x="1042.1" y="790.9" font-size="10" fill="#1c1c1c" textLength="20" lengthAdjust="spacingAndGlyphs">H851</text>
<text x="1156.8" y="791.9" font-size="10" fill="#1c1c1c" textLength="57.4" lengthAdjust="spacingAndGlyphs">Modified Date:</text>
<text x="1236.3" y="791.9" font-size="10" fill="#1c1c1c" textLength="41.4" lengthAdjust="spacingAndGlyphs">2020/3/16</text>
<text x="745.8" y="814" font-size="10" fill="#1c1c1c" textLength="27.3" lengthAdjust="spacingAndGlyphs">DRAWN</text>
<text x="829.3" y="814" font-size="10" fill="#1c1c1c" textLength="26.5" lengthAdjust="spacingAndGlyphs">DJF/TS</text>
<text x="879.8" y="814" font-size="10" fill="#1c1c1c" textLength="26.9" lengthAdjust="spacingAndGlyphs">DATED</text>
<text x="915.6" y="813.7" font-size="10" fill="#1c1c1c" textLength="41.6" lengthAdjust="spacingAndGlyphs">2020/3/16</text>
<text x="965.2" y="814.4" font-size="10" fill="#1c1c1c" textLength="25.3" lengthAdjust="spacingAndGlyphs">TITLE:</text>
<text x="1042.1" y="813.6" font-size="10" fill="#1c1c1c" textLength="36.2" lengthAdjust="spacingAndGlyphs">2.SUB_RF</text>
<text x="745.8" y="830.2" font-size="10" fill="#1c1c1c" textLength="35.7" lengthAdjust="spacingAndGlyphs">CHECKED</text>
<text x="818.8" y="830.2" font-size="10" fill="#1c1c1c" textLength="48" lengthAdjust="spacingAndGlyphs">&lt;CHECKED&gt;</text>
<text x="879.8" y="830.2" font-size="10" fill="#1c1c1c" textLength="26.9" lengthAdjust="spacingAndGlyphs">DATED</text>
<text x="929.5" y="830.2" font-size="10" fill="#1c1c1c" textLength="16.5" lengthAdjust="spacingAndGlyphs">&lt;  &gt;</text>
<text x="967.7" y="830.2" font-size="10" fill="#1c1c1c" textLength="55.8" lengthAdjust="spacingAndGlyphs">Confidentiality</text>
<text x="1059.4" y="830.4" font-size="10" fill="#1c1c1c" font-weight="bold" textLength="62.2" lengthAdjust="spacingAndGlyphs">CONFIDENTIAL</text>
<text x="1156.8" y="822.2" font-size="10" fill="#1c1c1c" textLength="37.8" lengthAdjust="spacingAndGlyphs">VERSION:</text>
<text x="1206.8" y="822.2" font-size="10" fill="#1c1c1c" textLength="17.3" lengthAdjust="spacingAndGlyphs">V1.0</text>
<text x="1244.1" y="822.4" font-size="10" fill="#1c1c1c" textLength="26.3" lengthAdjust="spacingAndGlyphs">SHEET:</text>
<text x="1282" y="822.2" font-size="10" fill="#1c1c1c" textLength="18.5" lengthAdjust="spacingAndGlyphs">2 OF</text>
<text x="1325" y="821.8" font-size="10" fill="#1c1c1c" textLength="5" lengthAdjust="spacingAndGlyphs">2</text>
</svg><!--SCH-END-->
</div>
<div class="abs" style="left:1505px;top:161px;width:15px;height:674px;background:#fff"></div>
<div class="abs" style="left:1505px;top:161px;width:15px;height:17px;background:#fff;border-bottom:1px solid #c4c4c4;border-top:1px solid #c8c8c8"><svg class="abs" style="left:4px;top:5px" width="9" height="7" viewBox="0 0 9 7"><path d="M.7 5.700L4.500 1.700L8.300 5.700" fill="none" stroke="#444" stroke-width="1.300"/></svg></div>
<div class="abs" style="left:1505px;top:499px;width:15px;height:321px;background:#dcdcdc;border-top:1px solid #a0a0a0;border-bottom:1.500px solid #a0a0a0"><svg class="abs" style="left:4px;top:155px" width="8" height="9" viewBox="0 0 8 9"><path d="M0 1.500h8M0 4.500h8M0 7.500h8" stroke="#505050" stroke-width="1.500"/></svg></div>
<div class="abs" style="left:1505px;top:820px;width:15px;height:14px;background:#fff"><svg class="abs" style="left:3.500px;top:5px" width="9" height="7" viewBox="0 0 9 7"><path d="M.7 1.300L4.500 5.300L8.300 1.300" fill="none" stroke="#444" stroke-width="1.300"/></svg></div>
<div class="abs" style="left:253px;top:833.5px;width:1267px;height:3px;background:#f4f8fc"></div>
<div id="status" class="abs"><div class="abs mono" style="left:-0.5px;top:6px;line-height:16px;color:#000">Version:1.0.0.52</div><div class="abs mono" style="right:2px;top:6px;line-height:16px;color:#fff">Current [CE9 Sub_SCH Schematic diagram V1.2]</div></div>
</body></html>
